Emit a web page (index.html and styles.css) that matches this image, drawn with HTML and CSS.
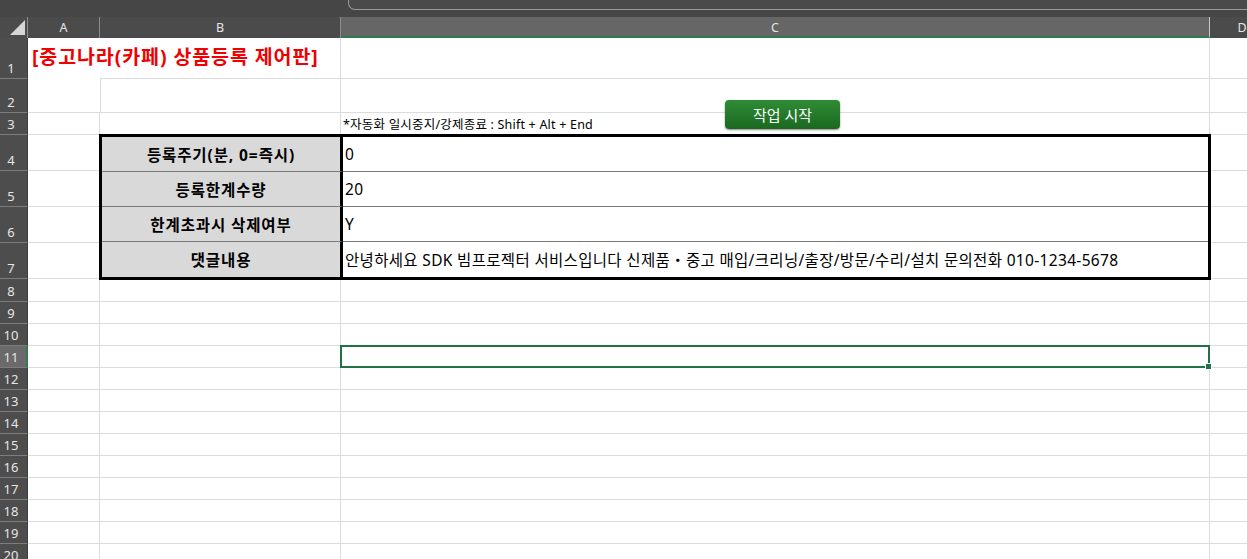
FILE: index.html
```html
<!DOCTYPE html>
<html lang="ko">
<head>
<meta charset="utf-8">
<title>중고나라 상품등록 제어판</title>
<link rel="stylesheet" href="styles.css">
</head>
<body>
<div class="topbar"><div class="fbox"></div></div>
<div class="sheet">
  <div class="ch corner"><svg width="17" height="16" viewBox="0 0 17 16"><polygon points="16,0 16,15 1,15" fill="#d6d6d6"/></svg></div>
  <div class="ch">A</div>
  <div class="ch">B</div>
  <div class="ch sel">C</div>
  <div class="ch last">D</div>

  <div class="c a merged"><span class="title">[중고나라(카페) 상품등록 제어판]</span></div>
  <div class="tbl">
    <div class="lbl">등록주기(분, 0=즉시)</div><div class="val">0</div>
    <div class="lbl">등록한계수량</div><div class="val">20</div>
    <div class="lbl">한계초과시 삭제여부</div><div class="val">Y</div>
    <div class="lbl last">댓글내용</div><div class="val last">안녕하세요 SDK 빔프로젝터 서비스입니다 신제품・중고 매입/크리닝/출장/방문/수리/설치 문의전화 010-1234-5678</div>
  </div>

  <div class="rh">1</div><div class="c"></div><div class="c"></div><div class="c"></div>
  <div class="rh">2</div><div class="c bl"></div><div class="c"></div><div class="c"></div>
  <div class="rh">3</div><div class="c"></div><div class="c"></div><div class="c note">*자동화 일시중지/강제종료 : Shift + Alt + End</div><div class="c"></div>
  <div class="rh">4</div><div class="c"></div><div class="c"></div>
  <div class="rh">5</div><div class="c"></div><div class="c"></div>
  <div class="rh">6</div><div class="c"></div><div class="c"></div>
  <div class="rh">7</div><div class="c"></div><div class="c"></div>
  <div class="rh">8</div><div class="c"></div><div class="c"></div><div class="c"></div><div class="c"></div>
  <div class="rh">9</div><div class="c"></div><div class="c"></div><div class="c"></div><div class="c"></div>
  <div class="rh">10</div><div class="c"></div><div class="c"></div><div class="c"></div><div class="c"></div>
  <div class="rh sel">11</div><div class="c"></div><div class="c"></div><div class="c active"></div><div class="c"></div>
  <div class="rh">12</div><div class="c"></div><div class="c"></div><div class="c"></div><div class="c"></div>
  <div class="rh">13</div><div class="c"></div><div class="c"></div><div class="c"></div><div class="c"></div>
  <div class="rh">14</div><div class="c"></div><div class="c"></div><div class="c"></div><div class="c"></div>
  <div class="rh">15</div><div class="c"></div><div class="c"></div><div class="c"></div><div class="c"></div>
  <div class="rh">16</div><div class="c"></div><div class="c"></div><div class="c"></div><div class="c"></div>
  <div class="rh">17</div><div class="c"></div><div class="c"></div><div class="c"></div><div class="c"></div>
  <div class="rh">18</div><div class="c"></div><div class="c"></div><div class="c"></div><div class="c"></div>
  <div class="rh">19</div><div class="c"></div><div class="c"></div><div class="c"></div><div class="c"></div>
  <div class="rh">20</div><div class="c"></div><div class="c"></div><div class="c"></div><div class="c"></div>
  <div class="rh">21</div><div class="c"></div><div class="c"></div><div class="c"></div><div class="c"></div>

  <div class="btn">작업 시작</div>
</div>
</body>
</html>
```
FILE: styles.css
```css
html, body {
  margin: 0;
  height: 100%;
  overflow: hidden;
  background: #464646;
}
body {
  font-family: "Noto Sans", "Noto Sans CJK KR", sans-serif;
}
.topbar {
  height: 17px;
  padding-left: 348px;
  background: #464646;
  overflow: hidden;
}
.fbox {
  height: 9px;
  border-left: 1px solid #9a9a9a;
  border-bottom: 1px solid #9a9a9a;
  border-bottom-left-radius: 7px;
  background: #4a4a4a;
}
.sheet {
  position: relative;
  display: grid;
  grid-template-columns: 28px 72px 241px 869px 64px;
  grid-template-rows: 21px 41px 34px 22px 36px 36px 36px 36px 23px repeat(13, 22px);
  background: #fff;
  overflow: hidden;
  height: 542px;
}
.ch {
  box-sizing: border-box;
  background: #4b4b4b;
  color: #e4e4e4;
  font-size: 12.5px;
  display: flex;
  align-items: center;
  justify-content: center;
  border-right: 1px solid #8c8c8c;
}
.ch.corner {
  justify-content: flex-end;
  align-items: flex-end;
  padding: 0 1px 2px 0;
  border-right: 1px solid #8c8c8c;
}
.ch.corner svg { display: block; }
.ch.sel {
  background: #666666;
  border-bottom: 2px solid #2f7a50;
  padding-top: 2px;
  border-right: 1px solid #c8c8c8;
}
.ch.last { border-right: none; }
.rh {
  box-sizing: border-box;
  background: #4d4d4d;
  color: #e6e6e6;
  font-size: 13px;
  display: flex;
  align-items: flex-end;
  justify-content: center;
  padding: 0 5px 1px 0;
  border-bottom: 1px solid #7c7c7c;
  border-right: 1px solid #3e3e3e;
}
.rh.sel {
  background: #6a6a6a;
  border-right: 2px solid #2f7a50;
  padding-right: 4px;
}
.c {
  box-sizing: border-box;
  border-right: 1px solid #dcdcdc;
  border-bottom: 1px solid #dcdcdc;
  min-width: 0;
}
.c.bl { border-left: 1px solid #dcdcdc; }
.merged {
  grid-column: 2;
  grid-row: 2 / span 2;
  border-right: none;
  position: relative;
  z-index: 2;
  padding: 7px 0 0 4px;
  white-space: nowrap;
}
.title {
  color: #f00000;
  font-weight: 700;
  font-size: 19.5px;
  letter-spacing: 0.9px;
  line-height: 24px;
}
.note {
  display: flex;
  align-items: flex-end;
  padding: 0 0 1px 2px;
  font-size: 12.5px;
  letter-spacing: 0.2px;
  line-height: 16px;
  color: #000;
  white-space: nowrap;
}
.tbl {
  grid-column: 3 / 5;
  grid-row: 5 / 9;
  margin: -1px -1px -1px -1px;
  border: 3px solid #000;
  display: grid;
  grid-template-columns: 241px 1fr;
  grid-template-rows: repeat(4, 1fr);
  position: relative;
  z-index: 2;
  background: #fff;
  font-size: 15.5px;
  color: #000;
}
.lbl {
  box-sizing: border-box;
  background: #d9d9d9;
  border-right: 3px solid #000;
  border-bottom: 1px solid #7a7a7a;
  font-weight: 700;
  letter-spacing: 0.9px;
  display: flex;
  align-items: center;
  justify-content: center;
}
.val {
  box-sizing: border-box;
  border-bottom: 1px solid #7a7a7a;
  display: flex;
  align-items: center;
  padding: 0 0 0 2px;
  letter-spacing: 0.33px;
  white-space: nowrap;
}
.lbl.last, .val.last { border-bottom: none; }
.active { position: relative; }
.active::after {
  content: "";
  position: absolute;
  left: -1px;
  top: -1px;
  right: -1px;
  bottom: -1px;
  border: 2px solid #217346;
}
.active::before {
  content: "";
  position: absolute;
  right: -3px;
  bottom: -3px;
  width: 5px;
  height: 5px;
  background: #217346;
  border: 1px solid #fff;
  z-index: 2;
}
.btn {
  position: absolute;
  left: 725px;
  top: 83px;
  width: 115px;
  height: 29px;
  box-sizing: border-box;
  border-radius: 4px;
  background: linear-gradient(#2f8c36, #1a681f);
  box-shadow: 0 1px 2px rgba(0, 0, 0, 0.45);
  color: #fff;
  font-size: 15px;
  display: flex;
  align-items: center;
  justify-content: center;
  z-index: 3;
}
```
